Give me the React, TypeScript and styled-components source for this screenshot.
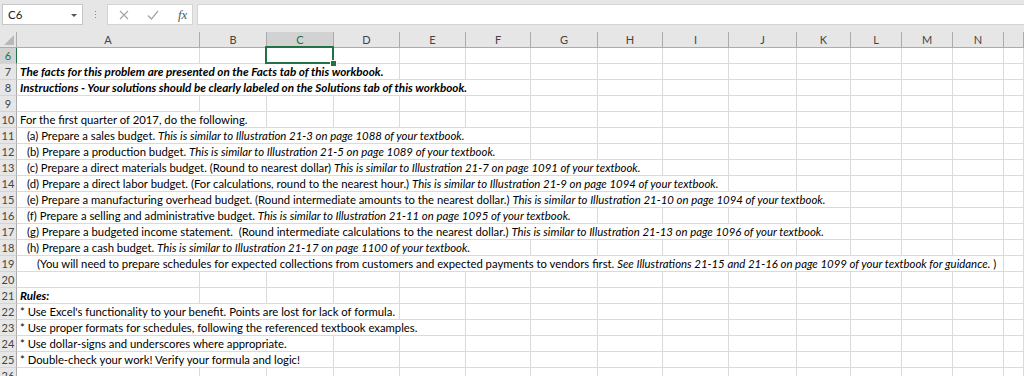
import styled, { createGlobalStyle } from 'styled-components'

const GlobalStyle = createGlobalStyle`
	body {
		margin: 0;
		background: #ffffff;
		font-family: Lato, 'Liberation Sans', sans-serif;
		overflow: hidden;
	}
`

const COLS = ['A', 'B', 'C', 'D', 'E', 'F', 'G', 'H', 'I', 'J', 'K', 'L', 'M', 'N', '']
const TEMPLATE = '17px 183px 67px 67px 66px 66px 65px 67px 65px 66px 68px 54px 51px 51px 51px 1fr'
const GREEN = '#217346'

type Part = { t: string; i?: boolean; b?: boolean }
type RowData = { n: number; span?: number; indent?: number; parts?: Part[] }

const ROWS: RowData[] = [
	{ n: 6 },
	{
		n: 7,
		span: 4,
		parts: [{ t: 'The facts for this problem are presented on the Facts tab of this workbook.', i: true, b: true }],
	},
	{
		n: 8,
		span: 6,
		parts: [
			{ t: 'Instructions - Your solutions should be clearly labeled on the Solutions tab of this workbook.', i: true, b: true },
		],
	},
	{ n: 9 },
	{ n: 10, span: 2, parts: [{ t: 'For the first quarter of 2017, do the following.' }] },
	{
		n: 11,
		span: 6,
		indent: 7,
		parts: [
			{ t: '(a) Prepare a sales budget. ' },
			{ t: 'This is similar to Illustration 21-3 on page 1088 of your textbook.', i: true },
		],
	},
	{
		n: 12,
		span: 6,
		indent: 7,
		parts: [
			{ t: '(b) Prepare a production budget. ' },
			{ t: 'This is similar to Illustration 21-5 on page 1089 of your textbook.', i: true },
		],
	},
	{
		n: 13,
		span: 8,
		indent: 7,
		parts: [
			{ t: '(c) Prepare a direct materials budget. (Round to nearest dollar) ' },
			{ t: 'This is similar to Illustration 21-7 on page 1091 of your textbook.', i: true },
		],
	},
	{
		n: 14,
		span: 9,
		indent: 7,
		parts: [
			{ t: '(d) Prepare a direct labor budget. (For calculations, round to the nearest hour.) ' },
			{ t: 'This is similar to Illustration 21-9 on page 1094 of your textbook.', i: true },
		],
	},
	{
		n: 15,
		span: 11,
		indent: 7,
		parts: [
			{ t: '(e) Prepare a manufacturing overhead budget. (Round intermediate amounts to the nearest dollar.) ' },
			{ t: 'This is similar to Illustration 21-10 on page 1094 of your textbook.', i: true },
		],
	},
	{
		n: 16,
		span: 7,
		indent: 7,
		parts: [
			{ t: '(f) Prepare a selling and administrative budget. ' },
			{ t: 'This is similar to Illustration 21-11 on page 1095 of your textbook.', i: true },
		],
	},
	{
		n: 17,
		span: 11,
		indent: 7,
		parts: [
			{ t: '(g) Prepare a budgeted income statement.  (Round intermediate calculations to the nearest dollar.) ' },
			{ t: 'This is similar to Illustration 21-13 on page 1096 of your textbook.', i: true },
		],
	},
	{
		n: 18,
		span: 6,
		indent: 7,
		parts: [
			{ t: '(h) Prepare a cash budget. ' },
			{ t: 'This is similar to Illustration 21-17 on page 1100 of your textbook.', i: true },
		],
	},
	{
		n: 19,
		span: 14,
		indent: 17,
		parts: [
			{ t: '(You will need to prepare schedules for expected collections from customers and expected payments to vendors first. ' },
			{ t: 'See Illustrations 21-15 and 21-16 on page 1099 of your textbook for guidance.', i: true },
			{ t: ' )' },
		],
	},
	{ n: 20 },
	{ n: 21, span: 1, parts: [{ t: 'Rules:', i: true, b: true }] },
	{ n: 22, span: 4, parts: [{ t: "* Use Excel's functionality to your benefit. Points are lost for lack of formula." }] },
	{ n: 23, span: 5, parts: [{ t: '* Use proper formats for schedules, following the referenced textbook examples.' }] },
	{ n: 24, span: 3, parts: [{ t: '* Use dollar-signs and underscores where appropriate.' }] },
	{ n: 25, span: 3, parts: [{ t: '* Double-check your work! Verify your formula and logic!' }] },
	{ n: 26 },
]

const Window = styled.div`
	width: 1024px;
	height: 376px;
	overflow: hidden;
	background: #ffffff;
`

const FormulaBar = styled.div`
	height: 32px;
	box-sizing: border-box;
	display: flex;
	align-items: flex-start;
	padding: 4px 0 0 2px;
	background: #e6e6e6;
`

const NameBox = styled.div`
	width: 81px;
	height: 21px;
	box-sizing: border-box;
	display: flex;
	align-items: center;
	justify-content: space-between;
	padding: 0 5px 0 5px;
	background: #ffffff;
	border: 1px solid #c6c6c6;
	font-size: 11.5px;
	color: #222222;
`

const DropArrow = styled.span`
	width: 0;
	height: 0;
	border-left: 3px solid transparent;
	border-right: 3px solid transparent;
	border-top: 3px solid #555555;
	margin-top: 1px;
`

const Grip = styled.div`
	width: 24px;
	height: 21px;
	display: flex;
	flex-direction: column;
	align-items: center;
	justify-content: center;
	gap: 2px;
	span {
		width: 1px;
		height: 1px;
		background: #8a8a8a;
	}
`

const ButtonGroup = styled.div`
	width: 86px;
	height: 21px;
	box-sizing: border-box;
	display: flex;
	align-items: center;
	background: #ffffff;
	border: 1px solid #d4d4d4;
	padding-left: 11px;
	gap: 18px;
`

const Fx = styled.span`
	font-family: 'Liberation Serif', serif;
	font-style: italic;
	font-size: 13px;
	color: #555555;
	margin-left: 1px;
`

const FormulaInput = styled.div`
	flex: 1;
	height: 21px;
	margin-left: 4px;
	box-sizing: border-box;
	background: #ffffff;
	border: 1px solid #d4d4d4;
	border-right: none;
`

const Row = styled.div`
	display: grid;
	grid-template-columns: ${TEMPLATE};
	height: 16px;
`

const HeaderCell = styled.div<{ $selected?: boolean }>`
	box-sizing: border-box;
	display: flex;
	align-items: center;
	justify-content: center;
	font-size: 11px;
	color: ${({ $selected }) => ($selected ? GREEN : '#444444')};
	background: ${({ $selected }) => ($selected ? '#d2d2d2' : '#e6e6e6')};
	border-right: 1px solid #ababab;
	border-bottom: 1px solid ${({ $selected }) => ($selected ? GREEN : '#ababab')};
`

const Corner = styled.div`
	box-sizing: border-box;
	background: #e6e6e6;
	border-right: 1px solid #ababab;
	border-bottom: 1px solid #ababab;
	display: flex;
	align-items: flex-end;
	justify-content: flex-end;
	padding: 0 2px 2px 0;
	span {
		width: 0;
		height: 0;
		border-left: 10px solid transparent;
		border-bottom: 10px solid #b9b9b9;
	}
`

const RowHeader = styled.div<{ $selected?: boolean }>`
	box-sizing: border-box;
	display: flex;
	align-items: flex-end;
	justify-content: center;
	font-size: 11px;
	line-height: 15px;
	color: ${({ $selected }) => ($selected ? GREEN : '#444444')};
	background: ${({ $selected }) => ($selected ? '#d2d2d2' : '#e6e6e6')};
	border-right: 1px solid ${({ $selected }) => ($selected ? GREEN : '#ababab')};
	border-bottom: 1px solid #d4d4d4;
`

const Cell = styled.div<{ $span?: number; $indent?: number; $active?: boolean }>`
	position: relative;
	grid-column: span ${({ $span }) => $span ?? 1};
	box-sizing: border-box;
	border-right: 1px solid #dadada;
	border-bottom: 1px solid #dadada;
	padding-left: ${({ $indent }) => 3 + ($indent ?? 0)}px;
	font-size: 11.3px;
	line-height: 15px;
	color: #000000;
	white-space: pre;
	overflow: visible;
	z-index: ${({ $active }) => ($active ? 2 : 1)};
	${({ $active }) =>
		$active &&
		`
		&::after {
			content: '';
			position: absolute;
			left: -2px;
			top: -2px;
			right: -1px;
			bottom: -1px;
			border: 2px solid ${GREEN};
		}
		&::before {
			content: '';
			position: absolute;
			right: -4px;
			bottom: -4px;
			width: 5px;
			height: 5px;
			background: ${GREEN};
			border: 1px solid #ffffff;
			z-index: 3;
		}
	`}
`

const Text = styled.span<{ $i?: boolean; $b?: boolean }>`
	font-style: ${({ $i }) => ($i ? 'italic' : 'normal')};
	font-weight: ${({ $b }) => ($b ? 700 : 400)};
	font-size: ${({ $i, $b }) => ($b ? '11.7px' : $i ? '11.4px' : 'inherit')};
`

const Icon = ({ kind }: { kind: 'x' | 'check' }) =>
	kind === 'x' ? (
		<svg width='10' height='10' viewBox='0 0 10 10'>
			<path d='M1 1 L9 9 M9 1 L1 9' stroke='#a6a6a6' strokeWidth='1.2' fill='none' />
		</svg>
	) : (
		<svg width='12' height='10' viewBox='0 0 12 10'>
			<path d='M1 5.5 L4.5 9 L11 1' stroke='#a6a6a6' strokeWidth='1.2' fill='none' />
		</svg>
	)

const SheetRow = ({ row }: { row: RowData }) => {
	const span = row.parts ? row.span ?? 1 : 0
	const rest = COLS.length - span
	return (
		<Row>
			<RowHeader $selected={row.n === 6}>{row.n}</RowHeader>
			{row.parts && (
				<Cell $span={span} $indent={row.indent}>
					{row.parts.map((p, k) => (
						<Text key={k} $i={p.i} $b={p.b}>
							{p.t}
						</Text>
					))}
				</Cell>
			)}
			{Array.from({ length: rest }).map((_, k) => (
				<Cell key={k} $active={row.n === 6 && k + span === 2} />
			))}
		</Row>
	)
}

const App = () => (
	<Window>
		<GlobalStyle />
		<FormulaBar>
			<NameBox>
				C6
				<DropArrow />
			</NameBox>
			<Grip>
				<span />
				<span />
				<span />
			</Grip>
			<ButtonGroup>
				<Icon kind='x' />
				<Icon kind='check' />
				<Fx>fx</Fx>
			</ButtonGroup>
			<FormulaInput />
		</FormulaBar>
		<Row>
			<Corner>
				<span />
			</Corner>
			{COLS.map((c) => (
				<HeaderCell key={c || 'end'} $selected={c === 'C'}>
					{c}
				</HeaderCell>
			))}
		</Row>
		{ROWS.map((r) => (
			<SheetRow key={r.n} row={r} />
		))}
	</Window>
)

export default App
